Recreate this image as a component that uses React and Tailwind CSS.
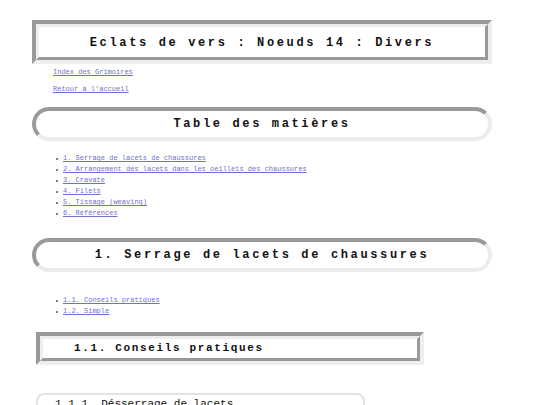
import React from "react";

const toc = [
  "1. Serrage de lacets de chaussures",
  "2. Arrangement des lacets dans les oeillets des chaussures",
  "3. Cravate",
  "4. Filets",
  "5. Tissage (weaving)",
  "6. Références",
];

const sub = ["1.1. Conseils pratiques", "1.2. Simple"];

const LinkList = ({ items }) => (
  <ul className="ml-[24px] flex flex-col">
    {items.map((t) => (
      <li key={t} className="flex items-center h-[11px]">
        <span className="w-[2px] h-[2px] rounded-full bg-[#555] mr-[5px]"></span>
        <a href="#" className="text-[7px] leading-[9px] text-[#6f6fd0] underline">
          {t}
        </a>
      </li>
    ))}
  </ul>
);

// groove frame: dark top/left outside, light inside
const Groove = ({ className, children }) => (
  <div
    className={`border-4 border-t-[#999] border-l-[#999] border-r-[#eee] border-b-[#eee] ${className}`}
  >
    <div className="h-full border-[3px] border-t-[#eee] border-l-[#eee] border-r-[#999] border-b-[#999] bg-white flex items-center">
      {children}
    </div>
  </div>
);

const Pill = ({ children, className }) => (
  <div
    className={`h-[34px] rounded-[18px] border-4 border-t-[#9a9a9a] border-l-[#9a9a9a] border-r-[#ececec] border-b-[#ececec] bg-white flex items-center justify-center ${className}`}
  >
    {children}
  </div>
);

export default function App() {
  return (
    <div
      className="w-[540px] h-[405px] overflow-hidden bg-white text-[#111]"
      style={{ fontFamily: '"Liberation Mono", "Courier New", monospace' }}
    >
      <div className="ml-[32px] w-[460px]">
        {/* Title */}
        <Groove className="mt-[20px] h-[44px]">
          <h1 className="w-full text-center text-[12px] font-bold tracking-[0.22em] pt-[1px]">
            Eclats de vers : Noeuds 14 : Divers
          </h1>
        </Groove>

        <div className="ml-[21px] mt-[4px] flex flex-col">
          <a href="#" className="text-[7px] leading-[9px] text-[#6f6fd0] underline">
            Index des Grimoires
          </a>
          <a href="#" className="mt-[8px] text-[7px] leading-[9px] text-[#6f6fd0] underline">
            Retour à l'accueil
          </a>
        </div>

        {/* TOC */}
        <Pill className="mt-[13px]">
          <h2 className="text-[12px] font-bold tracking-[0.22em]">Table des matières</h2>
        </Pill>

        <div className="mt-[12px]">
          <LinkList items={toc} />
        </div>

        <Pill className="mt-[19px]">
          <h2 className="text-[12px] font-bold tracking-[0.22em]">
            1. Serrage de lacets de chaussures
          </h2>
        </Pill>

        <div className="mt-[23px]">
          <LinkList items={sub} />
        </div>

        <div className="ml-[4px]">
          <Groove className="mt-[15px] h-[33px] w-[388px]">
            <h3 className="ml-[31px] text-[11px] font-bold tracking-[0.15em]">
              1.1. Conseils pratiques
            </h3>
          </Groove>

          <div className="mt-[28px] w-[329px] h-[40px] rounded-[8px] border-2 border-[#e2e2e2] bg-white">
            <h4 className="ml-[17px] mt-[2px] text-[11px] leading-[14px]">
              1.1.1. Désserrage de lacets
            </h4>
          </div>
        </div>
      </div>
    </div>
  );
}
